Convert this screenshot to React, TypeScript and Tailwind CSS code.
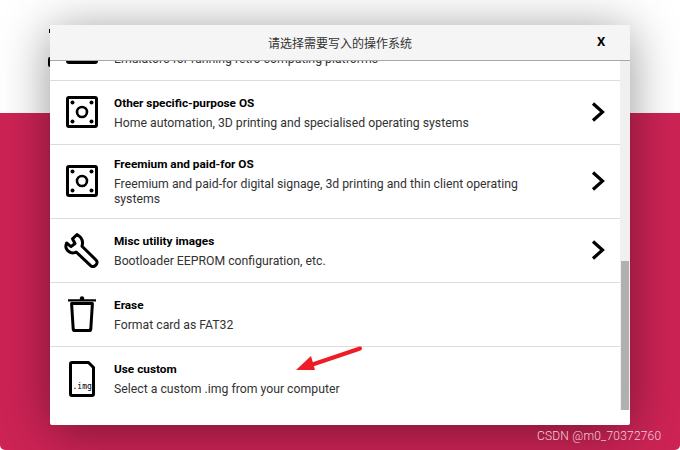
const ChipIcon = () => (
  <svg width="32" height="32" viewBox="0 0 32 32" fill="none">
    <rect x="1.5" y="1.5" width="29" height="29" rx="1.5" stroke="#000" strokeWidth="3" />
    <circle cx="6.5" cy="6.5" r="2" fill="#000" />
    <circle cx="25.5" cy="6.5" r="2" fill="#000" />
    <circle cx="6.5" cy="25.5" r="2" fill="#000" />
    <circle cx="25.5" cy="25.5" r="2" fill="#000" />
    <circle cx="16" cy="16" r="5" stroke="#000" strokeWidth="2.6" />
  </svg>
);

const WrenchIcon = () => (
  <svg width="36" height="36" viewBox="0 0 36 36" fill="none">
    <path
      d="M13 2.5 L8.5 6.8 L11 11.5 L7 14.6 L2.6 11 C0.8 15 2.4 19 6.5 20.5 C8.6 21.2 10.5 21 12.2 20 L26.6 33.6 C28.2 35 30 34.8 31.5 33.4 C33.4 31.6 33.6 29.6 32 28 L18 14.2 C19.4 9.5 18.6 5.6 13 2.5 Z"
      stroke="#000"
      strokeWidth="3"
      strokeLinejoin="round"
    />
  </svg>
);

const TrashIcon = () => (
  <svg width="28" height="36" viewBox="0 0 28 36" fill="none">
    <path d="M0 4.4 H28" stroke="#000" strokeWidth="2.4" />
    <circle cx="14" cy="2.4" r="2.2" fill="#000" />
    <path
      d="M3.6 7.6 H24.4 L22.8 33 C22.7 34 22 34.5 21 34.5 H7 C6 34.5 5.3 34 5.2 33 Z"
      stroke="#000"
      strokeWidth="3"
      strokeLinejoin="round"
    />
  </svg>
);

const FileIcon = () => (
  <div className="relative w-[26px] h-[36px]">
    <svg width="26" height="36" viewBox="0 0 26 36" fill="none">
      <path
        d="M3 1.5 H19.5 L24.5 6.5 V33 C24.5 34 24 34.5 23 34.5 H3 C2 34.5 1.5 34 1.5 33 V3 C1.5 2 2 1.5 3 1.5 Z"
        stroke="#000"
        strokeWidth="3"
        strokeLinejoin="round"
      />
    </svg>
    <span className="absolute left-[3.5px] top-[21px] text-[8px] leading-[10px] text-black font-['DejaVu_Sans_Mono',monospace]">
      .img
    </span>
  </div>
);

const Chevron = () => (
  <svg className="mb-[2px]" width="14" height="20" viewBox="0 0 14 20" fill="none">
    <path d="M2 1.5 L11.5 10 L2 18.5" stroke="#000" strokeWidth="3.2" />
  </svg>
);

interface OsRowProps {
  icon: React.ReactNode;
  title: string;
  desc: string;
  hasArrow?: boolean;
  className?: string;
}

const OsRow = ({ icon, title, desc, hasArrow, className }: OsRowProps) => (
  <div className={`flex items-center border-b border-[#dcdcdc] pr-[15px] ${className ?? ""}`}>
    <div className="w-[64px] shrink-0 flex justify-center pb-[1px]">{icon}</div>
    <div className="flex-1 min-w-0 pt-[1px]">
      <div className="text-[11.8px] leading-[15px] font-bold text-black">{title}</div>
      <div className="mt-[5px] text-[12.25px] leading-[15px] text-[#333] w-[420px]">{desc}</div>
    </div>
    {hasArrow && <Chevron />}
  </div>
);

export default function App() {
  return (
    <div className="relative w-[680px] h-[450px] overflow-hidden bg-white font-['Roboto',sans-serif]">
      <div className="h-[113px] bg-white" />
      <div className="h-[337px] bg-[#cd2355] rounded-b-[5px]" />

      <div className="absolute left-[49px] top-[29px] w-[1px] h-[4px] bg-black" />
      <div className="absolute left-[48px] top-[57px] w-[2px] h-[10px] bg-black rounded-l-[2px]" />

      <div className="absolute left-[50px] top-[25px] w-[580px] h-[400px] bg-white rounded-[2px] shadow-[0_6px_50px_rgba(0,0,0,0.42)] flex flex-col overflow-hidden">
        <div className="relative z-10 h-[36px] shrink-0 bg-[#f5f5f5] border-b border-[#a8a8a8] flex items-center justify-center">
          <span className="text-[12px] text-[#333] font-['Noto_Sans_CJK_SC',sans-serif]">请选择需要写入的操作系统</span>
          <span className="absolute left-[547px] top-[9px] text-[13px] leading-[16px] font-bold text-black">X</span>
        </div>

        <div className="flex flex-1 min-h-0">
          <div className="flex-1 min-w-0 overflow-hidden">
            <OsRow
              className="h-[64px] mt-[-44px]"
              icon={<ChipIcon />}
              title="Emulation and game OS"
              desc="Emulators for running retro computing platforms"
              hasArrow
            />
            <OsRow
              className="h-[64px]"
              icon={<ChipIcon />}
              title="Other specific-purpose OS"
              desc="Home automation, 3D printing and specialised operating systems"
              hasArrow
            />
            <OsRow
              className="h-[74px]"
              icon={<ChipIcon />}
              title="Freemium and paid-for OS"
              desc="Freemium and paid-for digital signage, 3d printing and thin client operating systems"
              hasArrow
            />
            <OsRow
              className="h-[64px]"
              icon={<WrenchIcon />}
              title="Misc utility images"
              desc="Bootloader EEPROM configuration, etc."
              hasArrow
            />
            <OsRow className="h-[64px]" icon={<TrashIcon />} title="Erase" desc="Format card as FAT32" />
            <OsRow
              className="h-[64px] border-b-0"
              icon={<FileIcon />}
              title="Use custom"
              desc="Select a custom .img from your computer"
            />
          </div>
          <div className="w-[10px] shrink-0 h-[349px] bg-[#f0f0f0] flex flex-col justify-end px-[1px]">
            <div className="h-[149px] bg-[#b0b0b0]" />
          </div>
        </div>
      </div>

      <svg className="absolute left-[295px] top-[345px]" width="70" height="30" viewBox="0 0 70 30" fill="none">
        <path d="M65 3.5 L16 20" stroke="#ee1c25" strokeWidth="4" strokeLinecap="round" />
        <path d="M1 25 L16 11 L20 25 Z" fill="#ee1c25" />
      </svg>

      <span className="absolute left-[537px] top-[428px] text-[12px] leading-[16px] tracking-[0.2px] font-light text-[#f0d0da]">
        CSDN @m0_70372760
      </span>
    </div>
  );
}
